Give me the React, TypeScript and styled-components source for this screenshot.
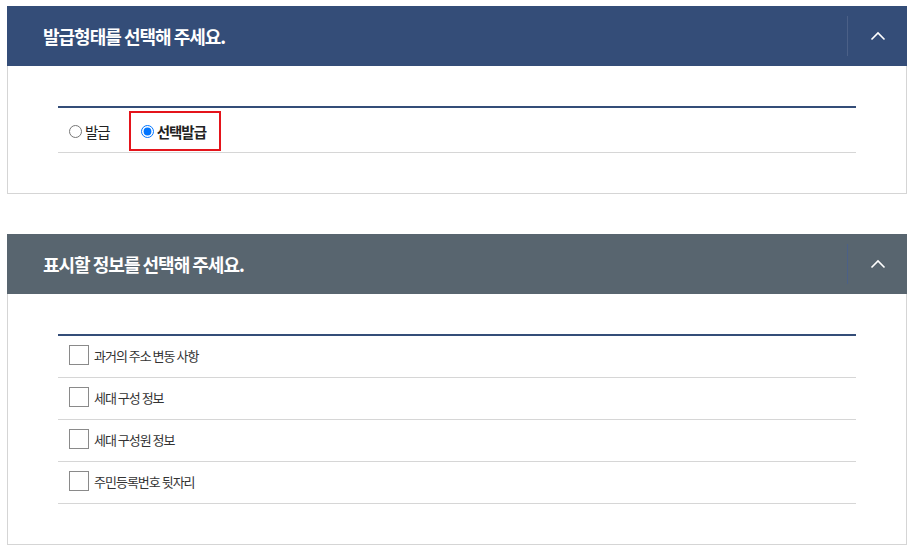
import React from "react";
import styled, { createGlobalStyle } from "styled-components";

const Global = createGlobalStyle`
  html, body { margin: 0; padding: 0; background: #fff; }
  body { font-family: "Noto Sans CJK KR", "Noto Sans", sans-serif; color: #333; }
  * { box-sizing: border-box; }
`;

const Page = styled.div`
  padding: 6px 8px 0 7px;
  width: 915px;
  display: flex;
  flex-direction: column;
  gap: 40px;
`;

const Section = styled.section`
  width: 900px;
  display: flex;
  flex-direction: column;
`;

const Header = styled.div<{ $bg: string }>`
  height: 60px;
  background: ${(p) => p.$bg};
  display: flex;
  align-items: center;
`;

const Title = styled.h2`
  flex: 1;
  margin: 0;
  padding-left: 36px;
  color: #fff;
  font-size: 18px;
  font-weight: 700;
  letter-spacing: -1px;
  line-height: 1;
`;

const ToggleButton = styled.button`
  width: 60px;
  height: 40px;
  border: 0;
  border-left: 1px solid #4b6087;
  background: transparent;
  display: flex;
  align-items: center;
  justify-content: center;
  padding: 0;
  cursor: pointer;
`;

const Body = styled.div`
  border: 1px solid #d5d5d5;
  border-top: 0;
  padding: 40px 50px 40px;
`;

const Table = styled.div`
  border-top: 2px solid #344d78;
  display: flex;
  flex-direction: column;
`;

const RadioRow = styled.div`
  height: 45px;
  border-bottom: 1px solid #d6d6d6;
  display: flex;
  align-items: center;
  padding-left: 9px;
  gap: 17px;
`;

const RadioLabel = styled.label<{ $highlight?: boolean }>`
  display: flex;
  align-items: center;
  height: 40px;
  margin-top: 2px;
  padding: ${(p) => (p.$highlight ? "0 13px 0 10px" : "0")};
  border: 2px solid ${(p) => (p.$highlight ? "#e4141b" : "transparent")};
  font-size: 14.5px;
  letter-spacing: -1px;
  font-weight: ${(p) => (p.$highlight ? 700 : 400)};
  color: #222;
  gap: 3px;
`;

const Radio = styled.input.attrs({ type: "radio" })`
  margin: 0;
  width: 13px;
  height: 13px;
  accent-color: #0075ff;
`;

const CheckRow = styled.label`
  height: 42px;
  border-bottom: 1px solid #d6d6d6;
  display: flex;
  align-items: center;
  padding: 0 0 3px 11px;
  gap: 5px;
  font-size: 13px;
  letter-spacing: -1px;
  color: #333;
`;

const Box = styled.span`
  width: 20px;
  height: 20px;
  border: 1px solid #8a8a8a;
  background: #fff;
  flex-shrink: 0;
`;

const Chevron = () => (
  <svg width="16" height="10" viewBox="0 0 16 10" fill="none">
    <path d="M1.5 8.5 L8 2 L14.5 8.5" stroke="#fff" strokeWidth="1.6" />
  </svg>
);

const items = ["과거의 주소 변동 사항", "세대 구성 정보", "세대 구성원 정보", "주민등록번호 뒷자리"];

export default function App() {
  return (
    <>
      <Global />
      <Page>
        <Section>
          <Header $bg="#344d78">
            <Title>발급형태를 선택해 주세요.</Title>
            <ToggleButton aria-label="접기">
              <Chevron />
            </ToggleButton>
          </Header>
          <Body>
            <Table>
              <RadioRow>
                <RadioLabel>
                  <Radio name="issue" />
                  발급
                </RadioLabel>
                <RadioLabel $highlight>
                  <Radio name="issue" defaultChecked />
                  선택발급
                </RadioLabel>
              </RadioRow>
            </Table>
          </Body>
        </Section>
        <Section>
          <Header $bg="#58656f">
            <Title>표시할 정보를 선택해 주세요.</Title>
            <ToggleButton aria-label="접기">
              <Chevron />
            </ToggleButton>
          </Header>
          <Body>
            <Table>
              {items.map((t) => (
                <CheckRow key={t}>
                  <Box />
                  {t}
                </CheckRow>
              ))}
            </Table>
          </Body>
        </Section>
      </Page>
    </>
  );
}
